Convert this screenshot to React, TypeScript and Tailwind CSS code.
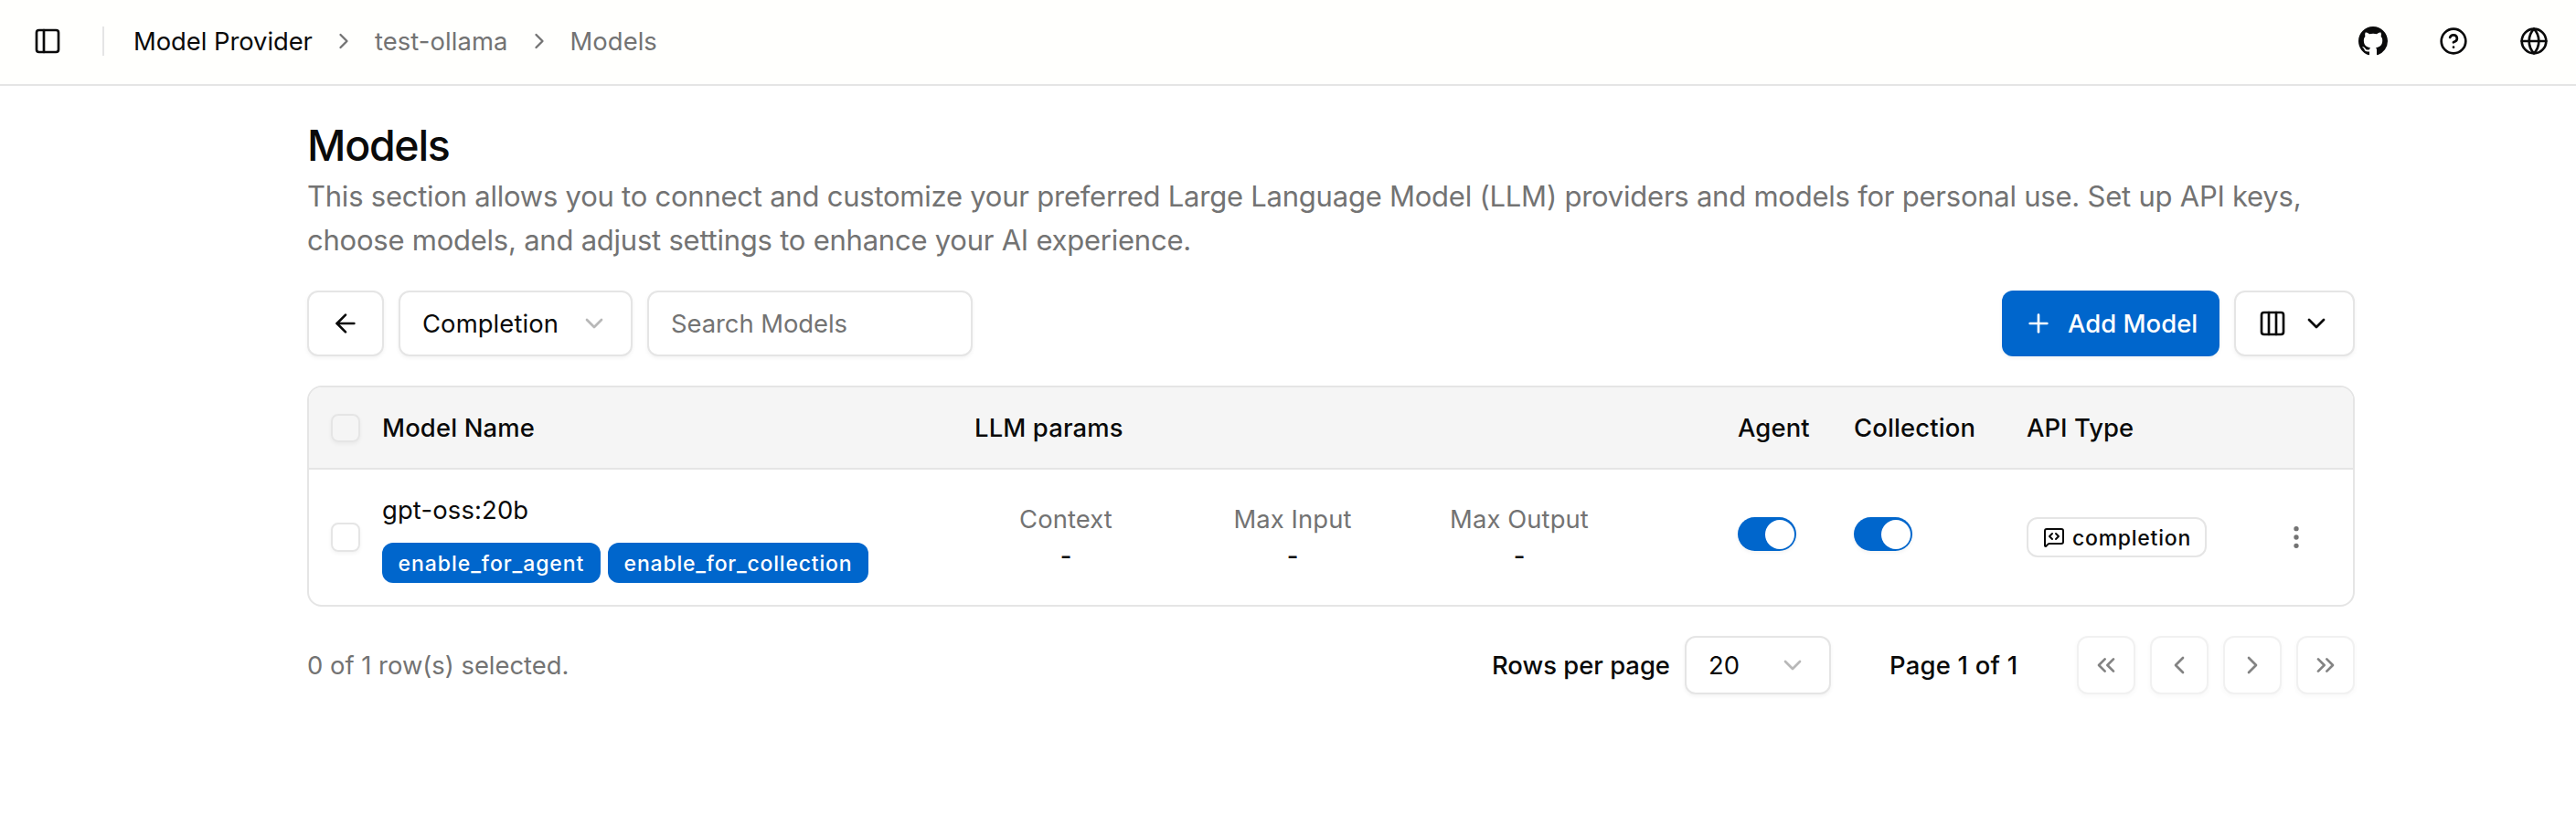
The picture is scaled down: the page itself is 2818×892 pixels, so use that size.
import type { ReactNode } from "react";
import {
  ArrowLeft,
  ChevronDown,
  ChevronLeft,
  ChevronRight,
  ChevronsLeft,
  ChevronsRight,
  CircleQuestionMark,
  Columns3,
  EllipsisVertical,
  Globe,
  MessageSquareCode,
  PanelLeft,
  Plus,
} from "lucide-react";
import { BsGithub } from "react-icons/bs";

const columns =
  "grid grid-cols-[80px_648px_835px_127px_189px_230px_1fr] items-center";

const outline =
  "flex shrink-0 items-center rounded-xl border-2 border-[#e5e5e5] bg-white shadow-[0_2px_4px_rgba(0,0,0,0.05)]";

function HeaderButton({ label, children }: { label: string; children: ReactNode }) {
  return (
    <button aria-label={label} className="flex size-[72px] items-center justify-center">
      {children}
    </button>
  );
}

function Header() {
  return (
    <header className="flex h-[94px] items-center border-b-2 border-[#e5e5e5] bg-[#fffffd] pr-[10px] pl-6 pb-0.5">
      <button aria-label="Toggle sidebar" className="flex size-14 items-center justify-center">
        <PanelLeft size={32} />
      </button>
      <div className="ml-8 h-8 w-0.5 bg-[#e5e5e5]" />
      <nav className="ml-8 flex items-center gap-5 text-[#737373]">
        <a className="-tracking-[0.05px] text-[#0a0a0a]">Model Provider</a>
        <ChevronRight size={28} />
        <span className="tracking-[0.1px]">test-ollama</span>
        <ChevronRight size={28} />
        <span className="tracking-[0.05px]">Models</span>
      </nav>
      <div className="ml-auto flex gap-4">
        <HeaderButton label="GitHub">
          <BsGithub size={32} />
        </HeaderButton>
        <HeaderButton label="Help">
          <CircleQuestionMark size={32} />
        </HeaderButton>
        <HeaderButton label="Language">
          <Globe size={32} />
        </HeaderButton>
      </div>
    </header>
  );
}

function Toolbar() {
  return (
    <div className="mt-[31px] flex h-[72px] justify-between">
      <div className="flex gap-4">
        <button aria-label="Back" className={`${outline} w-[84px] justify-center`}>
          <ArrowLeft size={32} />
        </button>
        <button className={`${outline} w-[256px] justify-between px-6`}>
          <span className="tracking-[0.1px]">Completion</span>
          <ChevronDown size={32} className="text-[#737373] opacity-50" />
        </button>
        <input
          placeholder="Search Models"
          className={`${outline} w-[356px] px-6 -tracking-[0.05px] placeholder:text-[#737373]`}
        />
      </div>
      <div className="flex gap-4">
        <button className="flex w-[238px] items-center gap-4 rounded-xl bg-[#0066cc] pl-6 font-medium tracking-[0.05px] whitespace-nowrap text-white shadow-[0_2px_4px_rgba(0,0,0,0.05)]">
          <Plus size={32} className="shrink-0" />
          Add Model
        </button>
        <button aria-label="Columns" className={`${outline} w-[132px] gap-4 px-6`}>
          <Columns3 size={32} />
          <ChevronDown size={32} />
        </button>
      </div>
    </div>
  );
}

function Toggle() {
  return (
    <button
      role="switch"
      aria-checked="true"
      className="mb-[7px] flex h-[37px] w-16 items-center rounded-full bg-[#0066cc] pl-[30px] shadow-[0_2px_4px_rgba(0,0,0,0.05)]"
    >
      <span className="size-8 rounded-full bg-white" />
    </button>
  );
}

function Param({ label }: { label: string }) {
  return (
    <div className="w-[200px] text-center">
      <div className="tracking-[0.1px] text-[#737373]">{label}</div>
      <div className="font-medium">-</div>
    </div>
  );
}

function ModelsTable() {
  return (
    <div className="mt-8 overflow-hidden rounded-2xl border-2 border-[#e5e5e5]">
      <div className={`${columns} h-[90px] border-b-2 border-[#e5e5e5] bg-[#f5f5f5] font-medium tracking-[0.15px]`}>
        <div className="ml-6 h-[31px] w-8 rounded-lg border-2 border-[#e5e5e5] shadow-[0_2px_4px_rgba(0,0,0,0.05)]" />
        <div>Model Name</div>
        <div>LLM params</div>
        <div>Agent</div>
        <div>Collection</div>
        <div className="tracking-[0.05px]">API Type</div>
      </div>
      <div className={`${columns} h-[148px]`}>
        <div className="ml-6 size-8 rounded-lg border-2 border-[#e5e5e5] shadow-[0_2px_4px_rgba(0,0,0,0.05)]" />
        <div>
          <div className="tracking-[0.15px]">gpt-oss:20b</div>
          <div className="mt-4 flex gap-2 text-[23px] font-medium text-white">
            <span className="flex h-11 w-[239px] items-center justify-center rounded-xl bg-[#0066cc] pt-0.5 tracking-[0.95px]">
              enable_for_agent
            </span>
            <span className="flex h-11 w-[285px] items-center justify-center rounded-xl bg-[#0066cc] pt-0.5 tracking-[0.8px]">
              enable_for_collection
            </span>
          </div>
        </div>
        <div className="flex gap-12">
          <Param label="Context" />
          <Param label="Max Input" />
          <Param label="Max Output" />
        </div>
        <Toggle />
        <Toggle />
        <div className="flex h-11 w-[197px] items-center gap-2 rounded-xl border-2 border-[#e5e5e5] pl-4 text-[23px] font-medium tracking-[0.75px]">
          <MessageSquareCode size={24} />
          <span className="pt-0.5">completion</span>
        </div>
        <div className="flex justify-end pr-[46px] text-[#737373]">
          <EllipsisVertical size={32} />
        </div>
      </div>
    </div>
  );
}

function PageButton({ label, children }: { label: string; children: ReactNode }) {
  return (
    <button aria-label={label} disabled className={`${outline} size-16 justify-center opacity-50`}>
      {children}
    </button>
  );
}

function Pagination() {
  return (
    <div className="mt-8 flex h-16 items-center">
      <div className="tracking-[0px] text-[#737373]">0 of 1 row(s) selected.</div>
      <div className="ml-auto flex items-center gap-4 font-medium">
        <span className="w-[195px] tracking-[0px] whitespace-nowrap">Rows per page</span>
        <button className={`${outline} h-16 w-[160px] justify-between px-6 font-normal`}>
          20
          <ChevronDown size={32} className="text-[#737373] opacity-50" />
        </button>
      </div>
      <div className="mx-16 w-[141px] font-medium tracking-[0.25px] whitespace-nowrap">Page 1 of 1</div>
      <div className="flex gap-4">
        <PageButton label="First page">
          <ChevronsLeft size={32} />
        </PageButton>
        <PageButton label="Previous page">
          <ChevronLeft size={32} />
        </PageButton>
        <PageButton label="Next page">
          <ChevronRight size={32} />
        </PageButton>
        <PageButton label="Last page">
          <ChevronsRight size={32} />
        </PageButton>
      </div>
    </div>
  );
}

export default function App() {
  return (
    <div className="min-h-screen bg-white font-['Inter',sans-serif] text-[27.4px] leading-10 text-[#0a0a0a]">
      <Header />
      <main className="ml-[336px] w-[2240px] pt-[33px]">
        <h1 className="text-[46.5px] leading-[64px] font-medium tracking-[-1.3px]">Models</h1>
        <p className="text-[31px] leading-[48px] tracking-[-0.235px] text-[#737373]">
          This section allows you to connect and customize your preferred Large Language Model (LLM) providers and
          models for personal use. Set up API keys, choose models, and adjust settings to enhance your AI experience.
        </p>
        <Toolbar />
        <ModelsTable />
        <Pagination />
      </main>
    </div>
  );
}
